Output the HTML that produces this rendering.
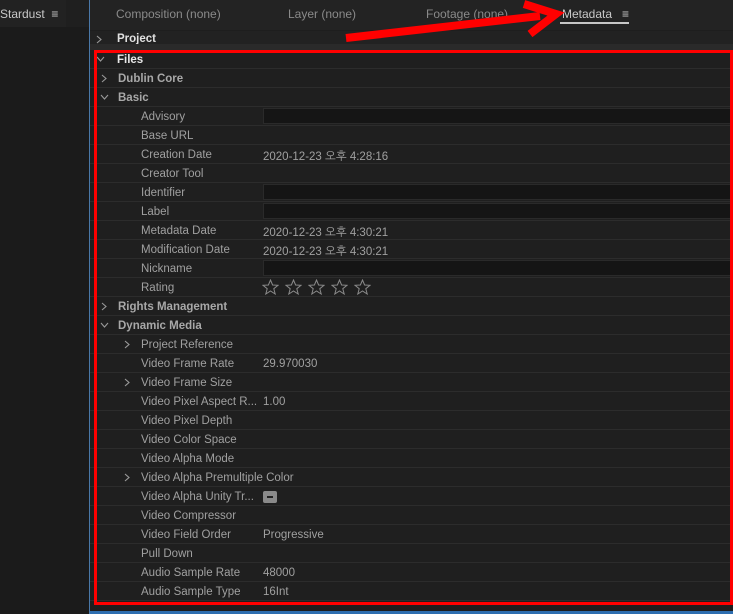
<!DOCTYPE html>
<html><head><style>
*{margin:0;padding:0;box-sizing:border-box}
body{width:733px;height:614px;background:#1e1e1e;font-family:"Liberation Sans","NanumGothic",sans-serif;font-size:11.5px;color:#a0a0a0;position:relative;overflow:hidden}
.a{position:absolute}
.row{position:absolute;left:90px;width:643px;height:19px;border-bottom:1px solid #2c2c2c;background:#1f1f1f}
.row span{position:absolute;top:4px;white-space:nowrap}
.h{font-weight:bold;color:#a8a8a8}
.ch{position:absolute;top:5px}
.inp{position:absolute;left:173px;top:1px;width:480px;height:16px;background:#151515;border:1px solid #2a2a2a}
</style></head><body>
<div class="a" style="left:0;top:0;width:89px;height:614px;background:#1b1b1b"></div>
<div class="a" style="left:0;top:0;width:66px;height:27px;background:#222"></div>
<div class="a" style="left:66px;top:0;width:23px;height:27px;background:#1f1f1f"></div>
<div class="a" style="left:0;top:7px;color:#c8c8c8;font-size:12px">Stardust&nbsp; ≡</div>
<div class="a" style="left:89px;top:0;width:1px;height:614px;background:#4a78a8"></div>
<div class="a" style="left:90px;top:0;width:643px;height:30px;background:#232323"></div>
<div class="a" style="left:116px;top:7px;color:#8a8a8a;font-size:12px">Composition (none)</div>
<div class="a" style="left:288px;top:7px;color:#8a8a8a;font-size:12px">Layer (none)</div>
<div class="a" style="left:426px;top:7px;color:#8a8a8a;font-size:12px">Footage (none)</div>
<div class="a" style="left:562px;top:7px;color:#c8c8c8;font-size:12px">Metadata&nbsp;&nbsp; ≡</div>
<div class="a" style="left:560px;top:22px;width:69px;height:2px;background:#c8c8c8"></div>
<div class="row" style="top:31px;background:#222;border:none"><svg class="ch" style="left:6px;top:4px" width="6" height="9"><path d="M1 1 L5 4.5 L1 8" fill="none" stroke="#999" stroke-width="1.1"/></svg><span style="left:27px;top:2px;font-weight:bold;color:#e0e0e0">Project</span></div>
<div class="a" style="left:90px;top:44px;width:643px;height:6px;background:#2a2a2a"></div>
<div id="rows"></div>
<div class="a" style="left:90px;top:611px;width:643px;height:3px;background:#2e6eb0"></div>
<div class="a" style="left:94px;top:50px;width:639px;height:555px;border:3px solid #f00"></div>
<svg class="a" style="left:0;top:0" width="733" height="614"><path d="M346 38 L540 16" stroke="#f00" stroke-width="8"/><path d="M524 4 L556 14 L530 34" fill="none" stroke="#f00" stroke-width="8"/></svg>
<script>
var R=[["Files",0,"v",1],["Dublin Core",1,">",0],["Basic",1,"v",0],["Advisory",2,"","","i"],["Base URL",2],["Creation Date",2,"","","2020-12-23 오후 4:28:16"],["Creator Tool",2],["Identifier",2,"","","i"],["Label",2,"","","i"],["Metadata Date",2,"","","2020-12-23 오후 4:30:21"],["Modification Date",2,"","","2020-12-23 오후 4:30:21"],["Nickname",2,"","","i"],["Rating",2,"","","s"],["Rights Management",1,">",0],["Dynamic Media",1,"v",0],["Project Reference",2,">"],["Video Frame Rate",2,"","","29.970030"],["Video Frame Size",2,">"],["Video Pixel Aspect R...",2,"","","1.00"],["Video Pixel Depth",2],["Video Color Space",2],["Video Alpha Mode",2],["Video Alpha Premultiple Color",2,">"],["Video Alpha Unity Tr...",2,"","","b"],["Video Compressor",2],["Video Field Order",2,"","","Progressive"],["Pull Down",2],["Audio Sample Rate",2,"","","48000"],["Audio Sample Type",2,"","","16Int"]];
var star='<svg width="17" height="16" viewBox="0 0 17 16"><path d="M8.5 1 L10.6 6 L16 6.3 L11.8 9.7 L13.2 15 L8.5 12 L3.8 15 L5.2 9.7 L1 6.3 L6.4 6 Z" fill="none" stroke="#8a8a8a" stroke-width="1"/></svg>';
var h="";R.forEach(function(r,i){var t=50+i*19;h+='<div class="row" style="top:'+t+'px">';
var lx=r[1]==0?27:r[1]==1?28:51;var cx=r[1]==0?6:r[1]==1?10:33;
if(r[2]==">")h+='<svg class="ch" style="left:'+(cx+1)+'px" width="6" height="9"><path d="M1 1 L5 4.5 L1 8" fill="none" stroke="#999" stroke-width="1.1"/></svg>';
if(r[2]=="v")h+='<svg class="ch" style="left:'+cx+'px;top:6px" width="9" height="6"><path d="M1 1 L4.5 5 L8 1" fill="none" stroke="#999" stroke-width="1.1"/></svg>';
h+='<span class="'+(r[1]<2?"h":"")+'" style="left:'+lx+'px;'+(r[3]?"color:#e8e8e8":"")+'">'+r[0]+'</span>';
var v=r[4];if(v=="i")h+='<div class="inp"></div>';else if(v=="s")h+='<div style="position:absolute;left:172px;top:1px;display:flex;gap:6px">'+star+star+star+star+star+'</div>';else if(v=="b")h+='<div style="position:absolute;left:173px;top:4px;width:14px;height:12px;background:#8a8a8a;border-radius:2px"><div style="position:absolute;left:4px;top:5px;width:6px;height:2px;background:#222"></div></div>';else if(v)h+='<span style="left:173px">'+v+'</span>';
h+='</div>'});document.getElementById("rows").outerHTML=h;
</script>
</body></html>
